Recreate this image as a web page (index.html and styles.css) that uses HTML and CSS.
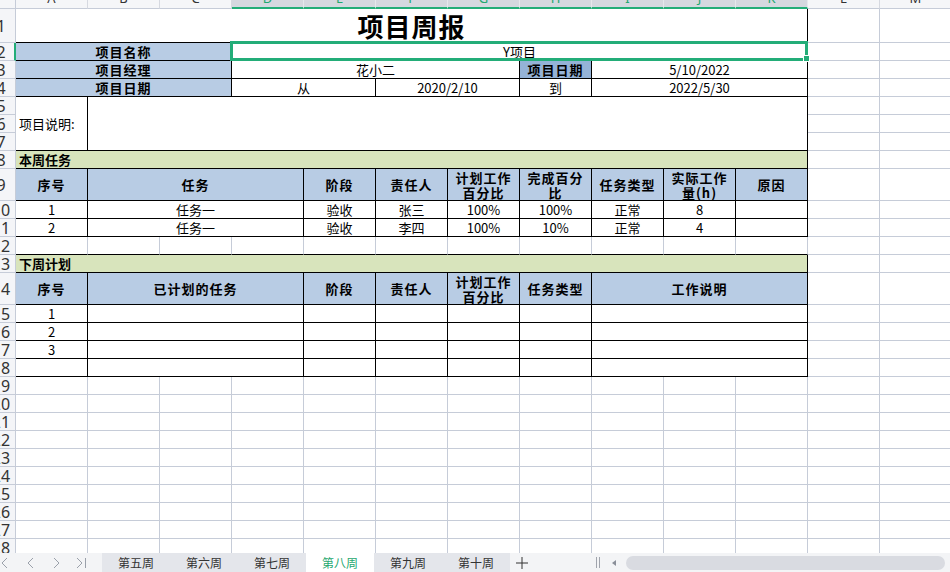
FILE: index.html
```html
<!DOCTYPE html>
<html lang="zh-CN">
<head>
<meta charset="utf-8">
<title>项目周报</title>
<link rel="stylesheet" href="styles.css">
</head>
<body>
<div class="app">
  <div class="sheet">
    <div class="corner"></div>
    <div class="ch"><span>A</span></div>
    <div class="ch"><span>B</span></div>
    <div class="ch"><span>C</span></div>
    <div class="ch on"><span>D</span></div>
    <div class="ch on"><span>E</span></div>
    <div class="ch on"><span>F</span></div>
    <div class="ch on"><span>G</span></div>
    <div class="ch on"><span>H</span></div>
    <div class="ch on"><span>I</span></div>
    <div class="ch on"><span>J</span></div>
    <div class="ch on"><span>K</span></div>
    <div class="ch"><span>L</span></div>
    <div class="ch"><span>M</span></div>

    <div class="rh"><span>1</span></div>
    <div class="c k s11 title">项目周报</div>
    <div class="c"></div><div class="c"></div>

    <div class="rh on"><span>2</span></div>
    <div class="c k s3 hd">项目名称</div>
    <div class="c k s8 sel">Y项目</div>
    <div class="c"></div><div class="c"></div>

    <div class="rh"><span>3</span></div>
    <div class="c k s3 hd">项目经理</div>
    <div class="c k s4">花小二</div>
    <div class="c k hd hd2">项目日期</div>
    <div class="c k s3">5/10/2022</div>
    <div class="c"></div><div class="c"></div>

    <div class="rh"><span>4</span></div>
    <div class="c k s3 hd">项目日期</div>
    <div class="c k s2">从</div>
    <div class="c k s2">2020/2/10</div>
    <div class="c k">到</div>
    <div class="c k s3">2022/5/30</div>
    <div class="c"></div><div class="c"></div>

    <div class="rh"><span>5</span></div>
    <div class="c k r3 l">项目说明:</div>
    <div class="c k s10 r3"></div>
    <div class="c"></div><div class="c"></div>
    <div class="rh"><span>6</span></div>
    <div class="c"></div><div class="c"></div>
    <div class="rh"><span>7</span></div>
    <div class="c"></div><div class="c"></div>

    <div class="rh"><span>8</span></div>
    <div class="c k s11 sec">本周任务</div>
    <div class="c"></div><div class="c"></div>

    <div class="rh"><span>9</span></div>
    <div class="c k hd">序号</div>
    <div class="c k s3 hd">任务</div>
    <div class="c k hd">阶段</div>
    <div class="c k hd">责任人</div>
    <div class="c k hd">计划工作<br>百分比</div>
    <div class="c k hd">完成百分<br>比</div>
    <div class="c k hd">任务类型</div>
    <div class="c k hd">实际工作<br>量(h)</div>
    <div class="c k hd">原因</div>
    <div class="c"></div><div class="c"></div>

    <div class="rh"><span>10</span></div>
    <div class="c k">1</div>
    <div class="c k s3">任务一</div>
    <div class="c k">验收</div>
    <div class="c k">张三</div>
    <div class="c k">100%</div>
    <div class="c k">100%</div>
    <div class="c k">正常</div>
    <div class="c k">8</div>
    <div class="c k"></div>
    <div class="c"></div><div class="c"></div>

    <div class="rh"><span>11</span></div>
    <div class="c k">2</div>
    <div class="c k s3">任务一</div>
    <div class="c k">验收</div>
    <div class="c k">李四</div>
    <div class="c k">100%</div>
    <div class="c k">10%</div>
    <div class="c k">正常</div>
    <div class="c k">4</div>
    <div class="c k"></div>
    <div class="c"></div><div class="c"></div>

    <div class="rh"><span>12</span></div>
    <div class="c kb"></div><div class="c kb"></div><div class="c kb"></div>
    <div class="c kb"></div><div class="c kb"></div><div class="c kb"></div>
    <div class="c kb"></div><div class="c kb"></div><div class="c kb"></div>
    <div class="c kb"></div><div class="c kb"></div>
    <div class="c"></div><div class="c"></div>

    <div class="rh"><span>13</span></div>
    <div class="c k s11 sec">下周计划</div>
    <div class="c"></div><div class="c"></div>

    <div class="rh"><span>14</span></div>
    <div class="c k hd">序号</div>
    <div class="c k s3 hd">已计划的任务</div>
    <div class="c k hd">阶段</div>
    <div class="c k hd">责任人</div>
    <div class="c k hd">计划工作<br>百分比</div>
    <div class="c k hd">任务类型</div>
    <div class="c k s3 hd">工作说明</div>
    <div class="c"></div><div class="c"></div>

    <div class="rh"><span>15</span></div>
    <div class="c k">1</div><div class="c k s3"></div><div class="c k"></div><div class="c k"></div>
    <div class="c k"></div><div class="c k"></div><div class="c k s3"></div>
    <div class="c"></div><div class="c"></div>

    <div class="rh"><span>16</span></div>
    <div class="c k">2</div><div class="c k s3"></div><div class="c k"></div><div class="c k"></div>
    <div class="c k"></div><div class="c k"></div><div class="c k s3"></div>
    <div class="c"></div><div class="c"></div>

    <div class="rh"><span>17</span></div>
    <div class="c k">3</div><div class="c k s3"></div><div class="c k"></div><div class="c k"></div>
    <div class="c k"></div><div class="c k"></div><div class="c k s3"></div>
    <div class="c"></div><div class="c"></div>

    <div class="rh"><span>18</span></div>
    <div class="c k"></div><div class="c k s3"></div><div class="c k"></div><div class="c k"></div>
    <div class="c k"></div><div class="c k"></div><div class="c k s3"></div>
    <div class="c"></div><div class="c"></div>

    <div class="rh"><span>19</span></div>
    <div class="blank"></div>
    <div class="rh"><span>20</span></div>
    <div class="rh"><span>21</span></div>
    <div class="rh"><span>22</span></div>
    <div class="rh"><span>23</span></div>
    <div class="rh"><span>24</span></div>
    <div class="rh"><span>25</span></div>
    <div class="rh"><span>26</span></div>
    <div class="rh"><span>27</span></div>
    <div class="rh"><span>28</span></div>
  </div>

  <div class="bar">
    <div class="nav">
      <svg class="ic" viewBox="0 0 12 12"><path d="M7 1 L2 6 L7 11"/></svg>
      <svg class="ic" viewBox="0 0 12 12"><path d="M8 1 L3 6 L8 11"/></svg>
      <svg class="ic" viewBox="0 0 12 12"><path d="M4 1 L9 6 L4 11"/></svg>
      <svg class="ic" viewBox="0 0 12 12"><path d="M2 1 L7 6 L2 11 M10.5 1 V11"/></svg>
    </div>
    <div class="tabs">
      <div class="tab">第五周</div>
      <div class="tab">第六周</div>
      <div class="tab">第七周</div>
      <div class="tab on">第八周</div>
      <div class="tab">第九周</div>
      <div class="tab">第十周</div>
    </div>
    <svg class="add" viewBox="0 0 12 12"><path d="M6 0 V12 M0 6 H12"/></svg>
    <svg class="grip" viewBox="0 0 6 11"><path d="M1.5 0 V11 M4.5 0 V11"/></svg>
    <svg class="arr" viewBox="0 0 4 6"><polygon points="4,0 4,6 0,3"/></svg>
    <div class="thumb"></div>
  </div>
</div>
</body>
</html>
```

FILE: styles.css
```css
html, body {
  margin: 0;
  padding: 0;
  background: #ffffff;
}

body {
  width: 950px;
  height: 572px;
  overflow: hidden;
  font-family: "Noto Sans CJK SC", "Noto Sans", sans-serif;
}

.app {
  display: flex;
  flex-direction: column;
  width: 950px;
  height: 572px;
}

.sheet {
  flex: none;
  width: 950px;
  height: 553px;
  overflow: hidden;
  display: grid;
  grid-template-columns: 16px repeat(13, 72px);
  grid-template-rows: 9px 34px repeat(7, 18px) 32px repeat(4, 18px) 32px repeat(14, 18px);
}

/* column headers */
.corner {
  box-sizing: border-box;
  background: #f5f6f8;
  border-right: 1px solid #c6ccd8;
  border-bottom: 1px solid #c6ccd8;
}

.ch {
  box-sizing: border-box;
  overflow: hidden;
  background: #f5f6f8;
  border-right: 1px solid #d6d9e0;
  border-bottom: 1px solid #c6ccd8;
  text-align: center;
}

.ch span {
  display: block;
  margin-top: -10px;
  line-height: 16px;
  font-family: "Noto Sans", sans-serif;
  font-size: 13px;
  color: #333333;
}

.ch.on {
  background: #d5d8df;
  border-right-color: #e6e8ec;
  border-bottom: 2px solid #23ad78;
}

.ch.on span {
  color: #21a870;
}

/* row headers */
.rh {
  box-sizing: border-box;
  display: flex;
  align-items: center;
  overflow: hidden;
  background: #f4f5f8;
  border-right: 1px solid #c6ccd8;
  border-bottom: 1px solid #c6ccd8;
}

.rh span {
  flex: none;
  width: 32px;
  margin-left: -15px;
  text-align: center;
  font-family: "Noto Sans", sans-serif;
  font-size: 16px;
  line-height: 16px;
  color: #333333;
}

.rh.on {
  border-right: 2px solid #23ad78;
}

/* cells */
.c {
  box-sizing: border-box;
  min-width: 0;
  display: flex;
  align-items: center;
  justify-content: center;
  text-align: center;
  overflow: hidden;
  white-space: nowrap;
  border-right: 1px solid #c6ccd8;
  border-bottom: 1px solid #c6ccd8;
  font-size: 13px;
  line-height: 15px;
  color: #000000;
}

.k {
  border-right-color: #000000;
  border-bottom-color: #000000;
}

.kb {
  border-bottom-color: #000000;
}

.s2 { grid-column: span 2; }
.s3 { grid-column: span 3; }
.s4 { grid-column: span 4; }
.s8 { grid-column: span 8; }
.s10 { grid-column: span 10; }
.s11 { grid-column: span 11; }
.r3 { grid-row: span 3; }

.title {
  font-size: 26px;
  line-height: 30px;
  font-weight: 700;
  letter-spacing: 1px;
}

.hd {
  background: #b8cce4;
  font-weight: 700;
  letter-spacing: 1px;
}

.hd2 {
  background: #95b3d7;
}

.sec {
  background: #d8e4bc;
  font-weight: 700;
  justify-content: flex-start;
  padding-left: 3px;
}

.l {
  justify-content: flex-start;
  padding-left: 3px;
}

.sel {
  position: relative;
  overflow: visible;
}

.sel::after {
  content: "";
  position: absolute;
  top: -2px;
  left: -2px;
  right: -1px;
  bottom: -1px;
  border: 3px solid #23ad78;
  z-index: 2;
}

.sel::before {
  content: "";
  position: absolute;
  right: -3px;
  bottom: -2px;
  width: 5px;
  height: 5px;
  background: #23ad78;
  border: 1px solid #ffffff;
  z-index: 3;
}

.blank {
  grid-column: span 13;
  grid-row: span 10;
  background-image:
    linear-gradient(to right, transparent 71px, #c6ccd8 71px),
    linear-gradient(to bottom, transparent 17px, #c6ccd8 17px);
  background-size: 72px 100%, 100% 18px;
}

/* sheet tab bar */
.bar {
  flex: none;
  height: 19px;
  display: flex;
  align-items: center;
  background: #f3f4f6;
}

.nav {
  flex: none;
  width: 102px;
  display: flex;
  align-items: center;
  gap: 13px;
}

.ic {
  width: 12px;
  height: 12px;
  fill: none;
  stroke: #9aa0aa;
  stroke-width: 1;
}

.tabs {
  flex: none;
  display: flex;
  height: 19px;
  background: #e4e6eb;
}

.tab {
  width: 68px;
  display: flex;
  align-items: center;
  justify-content: center;
  font-size: 12px;
  color: #333333;
}

.tab.on {
  background: #ffffff;
  color: #1fa870;
}

.add {
  flex: none;
  margin-left: 6px;
  width: 12px;
  height: 12px;
  fill: none;
  stroke: #333333;
  stroke-width: 1;
}

.grip {
  flex: none;
  margin-left: 67px;
  width: 6px;
  height: 11px;
  fill: none;
  stroke: #a0a4ad;
  stroke-width: 1;
}

.arr {
  flex: none;
  margin-left: 11px;
  width: 4px;
  height: 6px;
  fill: #8a8f99;
}

.thumb {
  flex: 1;
  margin-left: 10px;
  margin-right: 5px;
  height: 14px;
  border-radius: 7px;
  background: #d9dbe1;
}
```
